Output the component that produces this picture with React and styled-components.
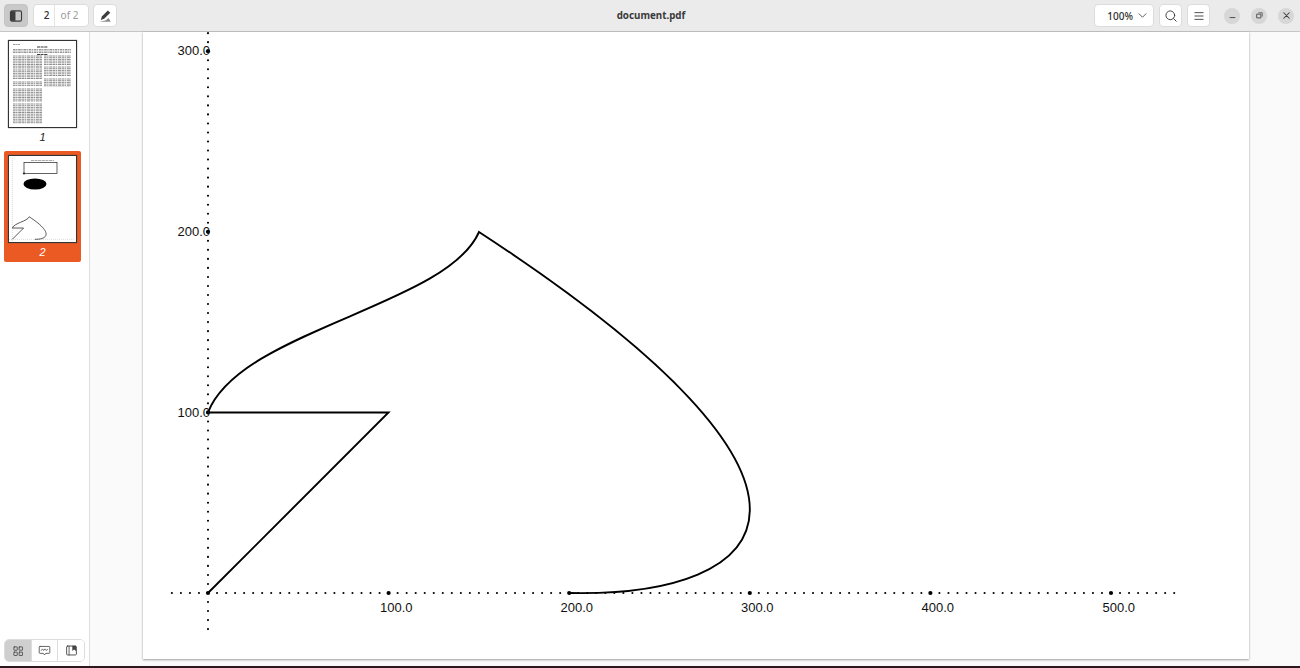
import React from "react";
import styled, { createGlobalStyle } from "styled-components";

const Global = createGlobalStyle`
  html, body { margin: 0; padding: 0; height: 100%; overflow: hidden; background: #fafafa; }
  body { font-family: "Noto Sans", "Open Sans", sans-serif; color: #3d3d3d; }
  #root { height: 100%; }
`;

const Shell = styled.div`
  display: flex;
  flex-direction: column;
  width: 1300px;
  height: 668px;
  overflow: hidden;
`;
const Header = styled.header`
  flex: 0 0 31px;
  display: grid;
  grid-template-columns: 1fr auto 1fr;
  align-items: center;
  padding: 0 6px 0 4px;
  background: #ebebeb;
  border-bottom: 1px solid #c6c6c6;
`;
const Group = styled.div`
  display: flex;
  align-items: center;
  gap: ${(p) => p.$gap || 4}px;
  justify-content: ${(p) => (p.$end ? "flex-end" : "flex-start")};
`;
const ToolButton = styled.button`
  width: ${(p) => (p.$narrow ? 23 : 24)}px;
  height: 23px;
  padding: 0;
  display: flex;
  align-items: center;
  justify-content: center;
  border-radius: 4px;
  color: #3d3d3d;
  background: ${(p) => (p.$active ? "#c9c9c9" : "#fff")};
  border: 1px solid ${(p) => (p.$active ? "#c4c4c4" : "#dcdcdc")};
  box-sizing: border-box;
`;
const PageEntry = styled.div`
  display: flex;
  width: 56px;
  height: 23px;
  margin-left: 1px;
  box-sizing: border-box;
  background: #fff;
  border: 1px solid #dcdcdc;
  border-radius: 4px;
  font-size: 10px;
  line-height: 21px;
`;
const PageNum = styled.span`
  width: 21px;
  padding-left: 5px;
  box-sizing: border-box;
  text-align: center;
  border-right: 1px solid #e4e4e4;
  color: #2e2e2e;
  font-weight: 500;
`;
const PageOf = styled.span`
  flex: 1;
  padding-right: 4px;
  text-align: center;
  color: #9a9a9a;
`;
const Title = styled.div`
  padding-left: 4px;
  font-size: 9.8px;
  font-weight: 700;
  color: #3a3a3a;
  text-align: center;
`;
const ZoomBox = styled.div`
  width: 60px;
  height: 23px;
  box-sizing: border-box;
  display: flex;
  align-items: center;
  justify-content: flex-end;
  gap: 4px;
  padding-right: 5px;
  background: #fff;
  border: 1px solid #dcdcdc;
  border-radius: 4px;
  font-size: 10px;
  font-weight: 500;
  color: #2e2e2e;
`;
const WinGroup = styled(Group)`
  margin-left: 9px;
  gap: 11px;
`;
const WinButton = styled.button`
  width: 16px;
  height: 16px;
  padding: 0;
  display: flex;
  align-items: center;
  justify-content: center;
  border: none;
  border-radius: 50%;
  background: #d7d7d7;
  color: #3d3d3d;
`;
const Main = styled.main`
  flex: 1;
  min-height: 0;
  display: flex;
`;
const Sidebar = styled.aside`
  flex: 0 0 85px;
  display: flex;
  flex-direction: column;
  justify-content: space-between;
  background: #fff;
  border-right: 1px solid #dedede;
  padding: 8px 0 4px 4px;
`;
const ThumbList = styled.div`
  display: flex;
  flex-direction: column;
  gap: 4px;
  width: 77px;
`;
const Thumb = styled.div`
  display: flex;
  flex-direction: column;
  align-items: center;
  padding: 4px 4px 1px;
  margin-top: ${(p) => (p.$selected ? "0" : "-4px")};
  border-radius: 2px;
  background: ${(p) => (p.$selected ? "#ec5a24" : "transparent")};
`;
const ThumbSheet = styled.svg`
  display: block;
  width: 69px;
  height: 88px;
  background: #fff;
  box-shadow: inset 0 0 0 1px #333, 0 0 1px #555;
`;
const ThumbLabel = styled.span`
  height: 18px;
  line-height: 18px;
  font-family: "Liberation Sans", sans-serif;
  font-style: italic;
  font-size: 11px;
  color: ${(p) => (p.$selected ? "#fff" : "#222")};
`;
const Tabs = styled.div`
  display: flex;
  width: 81px;
  height: 23px;
  box-sizing: border-box;
  border: 1px solid #dcdcdc;
  border-radius: 5px;
  overflow: hidden;
  background: #fff;
`;
const Tab = styled.button`
  flex: 1;
  padding: 0;
  display: flex;
  align-items: center;
  justify-content: center;
  border: none;
  border-left: ${(p) => (p.$first ? "none" : "1px solid #dcdcdc")};
  background: ${(p) => (p.$active ? "#cfcfcf" : "#fff")};
  color: #444;
`;
const Viewer = styled.section`
  flex: 1;
  min-width: 0;
  display: flex;
  padding: 0 51px 7px 53px;
  background: #fafafa;
`;
const Page = styled.div`
  flex: 1;
  background: #fff;
  box-shadow: 0 1px 2px rgba(0, 0, 0, 0.35), 0 0 2px rgba(0, 0, 0, 0.08);
  overflow: hidden;
`;
const PageSvg = styled.svg`
  display: block;
  width: 100%;
  height: 100%;
`;
const AxisLabel = styled.text`
  font-family: "Liberation Sans", Arial, sans-serif;
  font-size: 13px;
  fill: #111;
`;
const Strip = styled.div`
  flex: 0 0 2px;
  background: #2a1a1e;
`;

const OX = 208;
const OY = 593;
const STEP = 9.03;
const DRAWING =
  "M208 593 L388.5 412.5 L208 412.5 C240 330 447 306 479 232 C875 490 775 597 569.5 593";

const hDots = Array.from({ length: 112 }, (_, i) => i - 4);
const vDots = Array.from({ length: 68 }, (_, i) => i - 4);

function Dots() {
  return (
    <g fill="#000">
      {hDots.map((k) => (
        <circle key={"h" + k} cx={OX + k * STEP} cy={OY} r={k % 20 === 0 ? 2.1 : 1.05} />
      ))}
      {vDots.map((k) => (
        <circle key={"v" + k} cx={OX} cy={OY - k * STEP} r={k % 20 === 0 && k > 0 ? 2.1 : 1.05} />
      ))}
    </g>
  );
}

const textBlocks = [
  { x: 5, w: 29, ys: [16, 28] },
  { x: 5, w: 29, ys: [30, 40] },
  { x: 5, w: 29, ys: [42, 47] },
  { x: 5, w: 29, ys: [49, 62] },
  { x: 5, w: 29, ys: [64, 84] },
  { x: 36, w: 27, ys: [16, 25] },
  { x: 36, w: 27, ys: [27, 37] },
  { x: 36, w: 27, ys: [39, 46] },
];

function Lines() {
  const out = [];
  textBlocks.forEach((b, i) => {
    for (let y = b.ys[0]; y <= b.ys[1]; y += 1.7) {
      out.push(<line key={i + "-" + y} x1={b.x} x2={b.x + b.w} y1={y} y2={y} />);
    }
  });
  return <g stroke="#333" strokeWidth="0.8" strokeDasharray="2.6 0.5 1.4 0.7 3.1 0.5" opacity="0.7">{out}</g>;
}

function ThumbOne() {
  return (
    <ThumbSheet viewBox="0 0 69 88">
      <defs>
        <filter id="soft" x="-5%" y="-5%" width="110%" height="110%">
          <feGaussianBlur stdDeviation="0.4" />
        </filter>
      </defs>
      <g filter="url(#soft)">
        <g stroke="#444" strokeWidth="0.8" strokeDasharray="2.6 0.5 1.4 0.7" opacity="0.7">
          <line x1="5" x2="12" y1="4.5" y2="4.5" />
          <line x1="5" x2="63" y1="9.5" y2="9.5" />
          <line x1="5" x2="63" y1="11" y2="11" />
          <line x1="5" x2="63" y1="12.5" y2="12.5" />
        </g>
        <g stroke="#111" strokeWidth="1" strokeDasharray="3 0.6" opacity="0.8">
          <line x1="29" x2="40" y1="7" y2="7" />
          <line x1="29" x2="40" y1="14.5" y2="14.5" />
        </g>
        <Lines />
      </g>
    </ThumbSheet>
  );
}

function ThumbTwo() {
  return (
    <ThumbSheet viewBox="0 0 69 88">
      <line x1="23" x2="46" y1="5.5" y2="5.5" stroke="#aaa" strokeWidth="1" strokeDasharray="3 0.6" />
      <rect x="16" y="7.5" width="33" height="11" fill="none" stroke="#222" strokeWidth="0.7" />
      <circle cx="16" cy="18.5" r="1.1" fill="#222" />
      <ellipse cx="27" cy="29" rx="11.5" ry="5.5" fill="#000" />
      <line x1="4.3" x2="4.3" y1="3" y2="87" stroke="#ccc" strokeWidth="0.7" strokeDasharray="1 1" />
      <line x1="1" x2="66" y1="84.3" y2="84.3" stroke="#ccc" strokeWidth="0.7" strokeDasharray="1 1" />
      <g transform="translate(4.3 84.3) scale(0.0624) translate(-208 -593)">
        <path d={DRAWING} fill="none" stroke="#222" strokeWidth="12" />
      </g>
    </ThumbSheet>
  );
}

const Ico = ({ s = 12, children }) => (
  <svg width={s} height={s} viewBox="0 0 16 16" fill="none" stroke="currentColor" strokeWidth="1.3" strokeLinecap="round" strokeLinejoin="round">
    {children}
  </svg>
);

export default function App() {
  return (
    <Shell>
      <Global />
      <Header>
        <Group>
          <ToolButton $active>
            <Ico s={14}>
              <rect x="1.7" y="2.2" width="12.6" height="11.6" rx="1.6" />
              <rect x="2" y="2.5" width="5.4" height="11" fill="currentColor" stroke="none" />
            </Ico>
          </ToolButton>
          <PageEntry>
            <PageNum>2</PageNum>
            <PageOf>of 2</PageOf>
          </PageEntry>
          <ToolButton>
            <Ico s={14}>
              <path d="M11.2 1.6 L14 4.2 L7 11.2 L3.2 12.6 L4.4 8.6 Z" fill="currentColor" stroke="none" />
              <path d="M1.5 14.6 L14.6 14.6 L12 10.4 L8.6 13 Z" fill="#8a8a8a" stroke="none" />
            </Ico>
          </ToolButton>
        </Group>
        <Title>document.pdf</Title>
        <Group $end $gap={5}>
          <ZoomBox>
            100%
            <Ico s={11}>
              <path d="M3 5.5 L8 10.5 L13 5.5" strokeWidth="1.1" />
            </Ico>
          </ZoomBox>
          <ToolButton $narrow>
            <Ico s={14}>
              <circle cx="7.2" cy="7.2" r="5" strokeWidth="1.1" />
              <path d="M11 11 L14 14" strokeWidth="1.1" />
            </Ico>
          </ToolButton>
          <ToolButton $narrow>
            <Ico s={12}>
              <path d="M2.5 3.5 H13.5 M2.5 8 H13.5 M2.5 12.5 H13.5" strokeWidth="1.2" />
            </Ico>
          </ToolButton>
          <WinGroup>
            <WinButton>
              <Ico s={11}>
                <path d="M4.5 11 H11.5" strokeWidth="1.3" />
              </Ico>
            </WinButton>
            <WinButton>
              <Ico s={11}>
                <rect x="4.5" y="6" width="5.5" height="5.5" strokeWidth="1.2" />
                <path d="M7 4 H12 V9" strokeWidth="1" />
              </Ico>
            </WinButton>
            <WinButton>
              <Ico s={11}>
                <path d="M4 4 L12 12 M12 4 L4 12" strokeWidth="1.5" />
              </Ico>
            </WinButton>
          </WinGroup>
        </Group>
      </Header>
      <Main>
        <Sidebar>
          <ThumbList>
            <Thumb>
              <ThumbOne />
              <ThumbLabel>1</ThumbLabel>
            </Thumb>
            <Thumb $selected>
              <ThumbTwo />
              <ThumbLabel $selected>2</ThumbLabel>
            </Thumb>
          </ThumbList>
          <Tabs>
            <Tab $first $active>
              <Ico s={12}>
                <rect x="2.5" y="2.5" width="4.5" height="4.5" strokeWidth="1.1" rx="0.6" />
                <rect x="9.5" y="2.5" width="4.5" height="4.5" strokeWidth="1.1" rx="0.6" />
                <rect x="2.5" y="9.5" width="4.5" height="4.5" strokeWidth="1.1" rx="0.6" />
                <rect x="9.5" y="9.5" width="4.5" height="4.5" strokeWidth="1.1" rx="0.6" />
              </Ico>
            </Tab>
            <Tab>
              <Ico s={13}>
                <path d="M2.5 3 H13.5 Q14.5 3 14.5 4 V10.5 Q14.5 11.5 13.5 11.5 H9.5 L8 13.5 L6.5 11.5 H2.5 Q1.5 11.5 1.5 10.5 V4 Q1.5 3 2.5 3 Z" strokeWidth="1" />
                <path d="M4 8 L5.5 6 L7 8 L8.5 6 L10 8 L12 6.5" strokeWidth="0.9" />
              </Ico>
            </Tab>
            <Tab>
              <Ico s={13}>
                <rect x="2" y="2.5" width="12" height="11" rx="1.2" strokeWidth="1.1" />
                <path d="M5 2.5 V13.5" strokeWidth="1" />
                <path d="M9 2 H13.5 V8.5 L11.2 6.8 L9 8.5 Z" fill="currentColor" stroke="none" />
              </Ico>
            </Tab>
          </Tabs>
        </Sidebar>
        <Viewer>
          <Page>
            <PageSvg viewBox="143 32 1106 627">
              <Dots />
              <path d={DRAWING} fill="none" stroke="#000" strokeWidth="1.9" strokeLinejoin="miter" />
              <AxisLabel x="177.5" y="55">300.0</AxisLabel>
              <AxisLabel x="177.5" y="236">200.0</AxisLabel>
              <AxisLabel x="177.5" y="417">100.0</AxisLabel>
              <AxisLabel x="380" y="612">100.0</AxisLabel>
              <AxisLabel x="560.5" y="612">200.0</AxisLabel>
              <AxisLabel x="741" y="612">300.0</AxisLabel>
              <AxisLabel x="921.5" y="612">400.0</AxisLabel>
              <AxisLabel x="1102.5" y="612">500.0</AxisLabel>
            </PageSvg>
          </Page>
        </Viewer>
      </Main>
      <Strip />
    </Shell>
  );
}
